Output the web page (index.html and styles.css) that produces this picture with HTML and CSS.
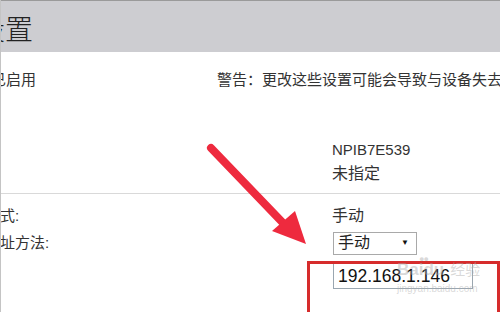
FILE: index.html
```html
<!DOCTYPE html>
<html lang="zh-CN">
<head>
  <meta charset="UTF-8">
  <meta name="viewport" content="width=device-width, initial-scale=1.0">
  <title>设置</title>
  <link rel="stylesheet" href="styles.css">
</head>
<body>
  <div class="page">
    <div class="header">
      <h1 class="title">设置</h1>
    </div>

    <div class="status">
      <span class="status-value">已启用</span>
      <span class="warning">警告：更改这些设置可能会导致与设备失去连接。</span>
    </div>

    <div class="section info">
      <div class="row">
        <span class="label">名称:</span>
        <span class="value latin">NPIB7E539</span>
      </div>
      <div class="row">
        <span class="label">位置:</span>
        <span class="value">未指定</span>
      </div>
    </div>

    <div class="section ip">
      <div class="row">
        <span class="label">模式:</span>
        <span class="value">手动</span>
      </div>
      <div class="row row-select">
        <span class="label">地址方法:</span>
        <div class="select">
          <span>手动</span>
          <span class="caret">▼</span>
        </div>
      </div>
      <div class="row row-input">
        <span class="label"></span>
        <div class="ip-input">192.168.1.146</div>
      </div>
    </div>

    <!-- 标注 -->
    <svg class="arrow" width="500" height="312" viewBox="0 0 500 312">
      <line x1="211" y1="148" x2="284" y2="224" stroke="#ee2a3e" stroke-width="8" stroke-linecap="round"/>
      <polygon points="306,244 272,231 295,211" fill="#ee2a3e"/>
    </svg>
    <div class="highlight"></div>

    <div class="watermark">
      <span class="paw">●●</span>
      <span class="wm-brand">Baidu</span><span class="wm-jy">经验</span>
      <div class="wm-url">jingyan.baidu.com</div>
    </div>
  </div>
</body>
</html>
```

FILE: styles.css
```css
body {
  margin: 0;
  font-family: "Liberation Sans", "Noto Sans CJK SC", sans-serif;
  color: #333;
}
.page {
  position: relative;
  width: 500px;
  height: 312px;
  overflow: hidden;
  background-color: #fff;
  border-left: 1px solid #c4c4c4;
  box-sizing: border-box;
}
.header {
  height: 51px;
  border-top: 1px solid #9a9a9a;
  background-color: #cdcdd1;
  display: flex;
  align-items: center;
}
.title {
  margin: 2px 0 0 -24px;
  font-family: "Noto Sans CJK SC", sans-serif;
  font-weight: 300;
  font-size: 28px;
  line-height: 30px;
  color: #222;
  white-space: nowrap;
}
.status {
  display: flex;
  padding-top: 18px;
  font-size: 15px;
  line-height: 20px;
  white-space: nowrap;
}
.status-value {
  margin-left: -10px;
  width: 226px;
  flex-shrink: 0;
}
.warning {
  color: #333;
}
.section {
  font-size: 15px;
}
.info {
  margin-top: 48px;
  padding-bottom: 7px;
  border-bottom: 1px solid #d9d9d9;
}
.row {
  display: flex;
  align-items: center;
  line-height: 24px;
  white-space: nowrap;
}
.label {
  width: 347px;
  margin-left: -16px;
  flex-shrink: 0;
}
.info .label {
  visibility: hidden;
}
.value {
  font-size: 16px;
}
.value.latin {
  font-size: 15px;
}
.ip {
  padding-top: 10px;
}
.row-select {
  margin-top: 3px;
}
.select {
  width: 84px;
  height: 23px;
  box-sizing: border-box;
  border: 1px solid #a9a9a9;
  display: flex;
  align-items: center;
  justify-content: space-between;
  padding: 0 7px 0 4px;
  font-size: 16px;
  margin-left: 1px;
  color: #222;
}
.caret {
  font-size: 8px;
  color: #111;
}
.row-input {
  margin-top: 8px;
}
.ip-input {
  width: 140px;
  height: 26px;
  box-sizing: border-box;
  border: 1px solid #9aa6b0;
  padding-left: 4px;
  margin-left: 1px;
  font-size: 17.5px;
  line-height: 24px;
  color: #111;
}
.arrow {
  position: absolute;
  left: -1px;
  top: 0;
}
.highlight {
  position: absolute;
  left: 306px;
  top: 261px;
  width: 193px;
  height: 70px;
  box-sizing: border-box;
  border: 3px solid #d62c2c;
}
.watermark {
  position: absolute;
  left: 396px;
  top: 256px;
  color: rgba(170, 170, 170, 0.45);
  white-space: nowrap;
}
.paw {
  position: absolute;
  left: 22px;
  top: -2px;
  font-size: 9px;
  letter-spacing: -1px;
}
.wm-brand {
  font-size: 17px;
  font-weight: bold;
  line-height: 28px;
}
.wm-jy {
  font-family: "Noto Sans CJK SC", sans-serif;
  font-size: 15px;
  margin-left: 6px;
}
.wm-url {
  font-size: 10px;
  line-height: 10px;
}
```
